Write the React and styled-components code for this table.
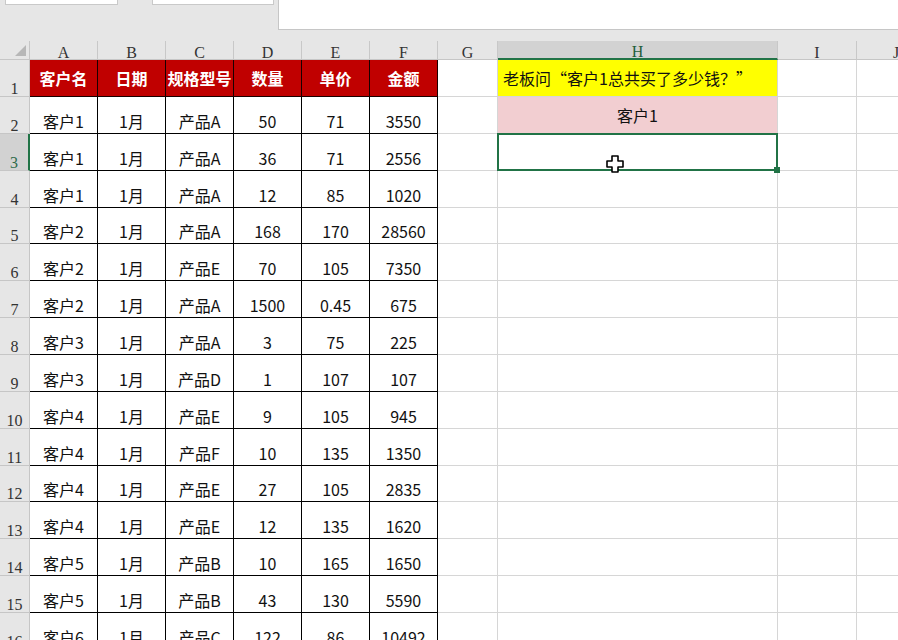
import React from "react";
import styled, { createGlobalStyle, css } from "styled-components";

const GlobalStyle = createGlobalStyle`
  html, body { margin: 0; padding: 0; overflow: hidden; background: #e6e6e6; }
  * { box-sizing: border-box; }
`;

const CJK = `"Noto Sans CJK SC", "Noto Sans", sans-serif`;
const GREEN = "#217346";
const WIDTHS = [30, 68, 68, 68, 68, 68, 68, 60, 280, 79, 79];
const COLS = ["A", "B", "C", "D", "E", "F", "G", "H", "I", "J"];

const HEAD = ["客户名", "日期", "规格型号", "数量", "单价", "金额"];
const ROWS = [
  ["客户1", "1月", "产品A", "50", "71", "3550"],
  ["客户1", "1月", "产品A", "36", "71", "2556"],
  ["客户1", "1月", "产品A", "12", "85", "1020"],
  ["客户2", "1月", "产品A", "168", "170", "28560"],
  ["客户2", "1月", "产品E", "70", "105", "7350"],
  ["客户2", "1月", "产品A", "1500", "0.45", "675"],
  ["客户3", "1月", "产品A", "3", "75", "225"],
  ["客户3", "1月", "产品D", "1", "107", "107"],
  ["客户4", "1月", "产品E", "9", "105", "945"],
  ["客户4", "1月", "产品F", "10", "135", "1350"],
  ["客户4", "1月", "产品E", "27", "105", "2835"],
  ["客户4", "1月", "产品E", "12", "135", "1620"],
  ["客户5", "1月", "产品B", "10", "165", "1650"],
  ["客户5", "1月", "产品B", "43", "130", "5590"],
  ["客户6", "1月", "产品C", "122", "86", "10492"],
];

const Page = styled.div`
  width: 898px;
  height: 640px;
  overflow: hidden;
  background: #e6e6e6;
  display: flex;
  flex-direction: column;
`;

const TopBar = styled.div`
  height: 41px;
  flex-shrink: 0;
  display: flex;
  align-items: flex-start;
`;

const BoxStub = styled.div`
  width: ${(p) => p.$w}px;
  margin-left: ${(p) => p.$ml}px;
  height: 5px;
  background: #fff;
  border: 1px solid #c9c9c9;
  border-top: none;
`;

const FormulaBar = styled.div`
  flex: 1;
  margin-left: 4px;
  height: 30px;
  background: #fff;
  border-left: 1px solid #c6c6c6;
  border-bottom: 1px solid #c6c6c6;
`;

const Sheet = styled.div`
  display: grid;
  grid-template-columns: ${WIDTHS.map((w) => w + "px").join(" ")};
  grid-template-rows: 19px 37px;
  grid-auto-rows: 36.86px;
  width: max-content;
`;

const Corner = styled.div`
  background: #e6e6e6;
  border-right: 1px solid #c6c6c6;
  border-bottom: 1px solid #c6c6c6;
  display: flex;
  align-items: flex-end;
  justify-content: flex-end;
  padding: 0 3px 3px 0;
`;

const headerFont = css`
  font-family: "Liberation Serif", "DejaVu Serif", serif;
  font-size: 16px;
  color: #333;
`;

const ColHeader = styled.div`
  ${headerFont}
  background: ${(p) => (p.$active ? "#d2d2d2" : "#e6e6e6")};
  border-right: 1px solid #c8c8c8;
  border-bottom: ${(p) => (p.$active ? `2px solid ${GREEN}` : "1px solid #c6c6c6")};
  display: flex;
  justify-content: center;
  align-items: flex-end;
  line-height: ${(p) => (p.$active ? 12 : 13)}px;
  color: ${(p) => (p.$active ? "#1e5e3a" : "#333")};
`;

const RowHeader = styled.div`
  ${headerFont}
  background: ${(p) => (p.$active ? "#d2d2d2" : "#e6e6e6")};
  border-right: ${(p) => (p.$active ? `2px solid ${GREEN}` : "1px solid #c6c6c6")};
  border-bottom: 1px solid #c6c6c6;
  display: flex;
  justify-content: center;
  align-items: flex-end;
  line-height: 14px;
  color: ${(p) => (p.$active ? "#2f6b4a" : "#333")};
`;

const variants = {
  head: css`
    background: #c00000;
    color: #fff;
    font-weight: 700;
    align-items: center;
    padding: 0;
    border-color: #1a0000;
  `,
  data: css`
    border-color: #000;
  `,
  plain: css``,
  question: css`
    background: #ffff00;
    justify-content: flex-start;
    align-items: center;
    padding: 0 0 0 5px;
  `,
  pink: css`
    background: #f2ced1;
    align-items: center;
    padding: 0;
  `,
  selected: css`
    position: relative;
  `,
};

const Cell = styled.div`
  font-family: ${CJK};
  font-size: 16px;
  line-height: 20px;
  color: #111;
  background: #fff;
  border-right: 1px solid #d6d6d6;
  border-bottom: 1px solid #d6d6d6;
  display: flex;
  justify-content: center;
  align-items: flex-end;
  padding-bottom: 2px;
  white-space: nowrap;
  ${(p) => variants[p.$v || "plain"]}
`;

const Selection = styled.div`
  position: absolute;
  top: -1px;
  left: -1px;
  width: calc(100% + 2px);
  height: calc(100% + 2px);
  border: 2px solid ${GREEN};
  pointer-events: none;
`;

const FillHandle = styled.div`
  position: absolute;
  right: -4px;
  bottom: -4px;
  width: 6px;
  height: 6px;
  background: ${GREEN};
`;

const Cursor = styled.svg`
  position: absolute;
  left: 108px;
  top: 21px;
`;

function CornerTriangle() {
  return (
    <svg width="11" height="11" viewBox="0 0 11 11">
      <polygon points="11,0 11,11 0,11" fill="#b7b7b7" />
    </svg>
  );
}

function PlusCursor() {
  return (
    <Cursor width="18" height="18" viewBox="0 0 18 18">
      <path
        d="M6 1 H12 V6 H17 V12 H12 V17 H6 V12 H1 V6 H6 Z"
        fill="#fff"
        stroke="#000"
        strokeWidth="1.6"
        strokeLinejoin="round"
      />
    </Cursor>
  );
}

function extraCells(row) {
  // G, H, I, J columns
  const cells = [<Cell key="G" />];
  if (row === 1) {
    cells.push(
      <Cell key="H" $v="question">
        老板问“客户1总共买了多少钱？”
      </Cell>
    );
  } else if (row === 2) {
    cells.push(
      <Cell key="H" $v="pink">
        客户1
      </Cell>
    );
  } else if (row === 3) {
    cells.push(
      <Cell key="H" $v="selected">
        <Selection>
          <FillHandle />
        </Selection>
        <PlusCursor />
      </Cell>
    );
  } else {
    cells.push(<Cell key="H" />);
  }
  cells.push(<Cell key="I" />);
  cells.push(<Cell key="J" />);
  return cells;
}

export default function App() {
  return (
    <>
      <GlobalStyle />
      <Page>
        <TopBar>
          <BoxStub $w={113} $ml={5} />
          <BoxStub $w={122} $ml={34} />
          <FormulaBar />
        </TopBar>
        <Sheet>
          <Corner>
            <CornerTriangle />
          </Corner>
          {COLS.map((c) => (
            <ColHeader key={c} $active={c === "H"}>
              {c}
            </ColHeader>
          ))}

          <RowHeader>1</RowHeader>
          {HEAD.map((h) => (
            <Cell key={h} $v="head">
              {h}
            </Cell>
          ))}
          {extraCells(1)}

          {ROWS.map((r, i) => {
            const rowNum = i + 2;
            return (
              <React.Fragment key={rowNum}>
                <RowHeader $active={rowNum === 3}>{rowNum}</RowHeader>
                {r.map((v, j) => (
                  <Cell key={j} $v="data">
                    {v}
                  </Cell>
                ))}
                {extraCells(rowNum)}
              </React.Fragment>
            );
          })}
        </Sheet>
      </Page>
    </>
  );
}
